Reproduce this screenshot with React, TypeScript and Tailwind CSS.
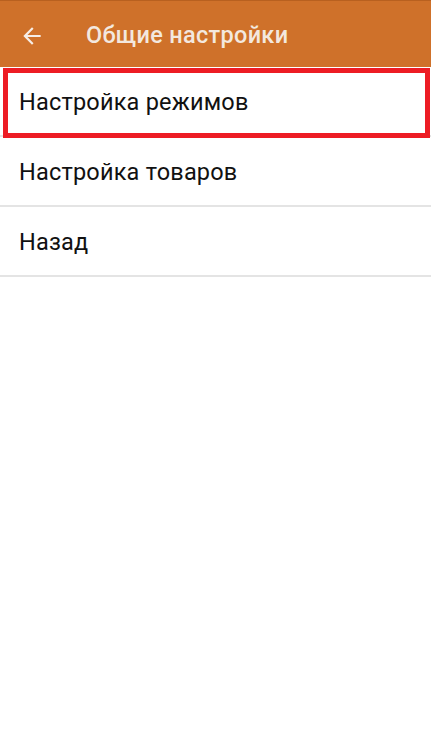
const items = ["Настройка режимов", "Настройка товаров", "Назад"];

function BackArrow() {
  return (
    <svg width="26" height="26" viewBox="0 0 24 24" fill="currentColor">
      <path d="M20 11H7.83l5.59-5.59L12 4l-8 8 8 8 1.41-1.41L7.83 13H20v-2z" />
    </svg>
  );
}

export default function App() {
  return (
    <div
      className="w-[431px] h-[740px] bg-white overflow-hidden"
      style={{ fontFamily: "Roboto, 'Noto Sans', sans-serif" }}
    >
      <header className="h-[67px] bg-[#cf712a] border-t border-[#b8601f] flex items-center pt-[3px]">
        <div className="w-[86px] pl-[19px] text-[#f6ede6] flex items-center">
          <BackArrow />
        </div>
        <h1 className="text-[23.5px] font-medium text-[#f3e8df] tracking-[0.3px]">Общие настройки</h1>
      </header>

      <ul>
        {items.map((label, i) => (
          <li
            key={label}
            className="relative h-[70px] border-b-2 border-[#e4e4e4] flex items-center pl-[19px] pt-[3px]"
          >
            <span className="text-[23.5px] text-[#111] tracking-[0.2px]">{label}</span>
            {i === 0 && (
              <div className="absolute left-[3px] right-[1px] top-[1px] bottom-[-3px] border-[5px] border-[#ed1c24]" />
            )}
          </li>
        ))}
      </ul>
    </div>
  );
}
